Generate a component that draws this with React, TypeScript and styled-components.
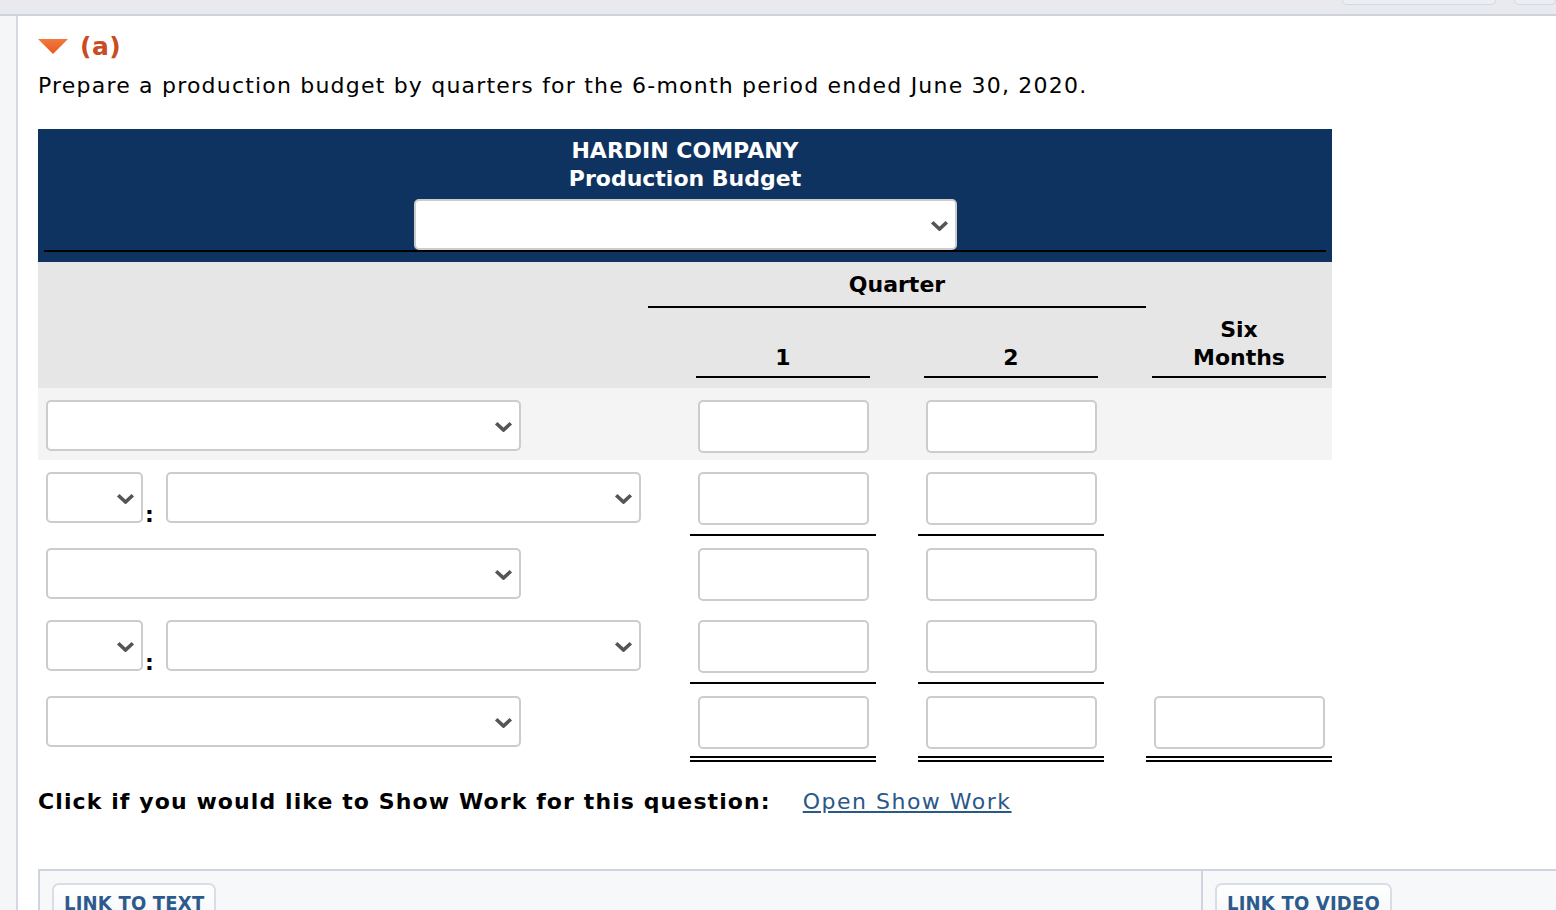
import React from 'react';
import styled, { createGlobalStyle } from 'styled-components';

const GlobalStyle = createGlobalStyle`
  html, body {
    margin: 0;
    padding: 0;
    background: #ffffff;
  }
  body {
    font-family: "DejaVu Sans", Verdana, sans-serif;
    color: #000000;
  }
`;

const Page = styled.div`
  width: 1556px;
  height: 910px;
  overflow: hidden;
  display: flex;
  flex-direction: column;
`;

const TopBar = styled.div`
  height: 14px;
  flex: none;
  background: #e8eaf0;
  border-bottom: 2px solid #cdd3dd;
  display: flex;
  justify-content: flex-end;
  gap: 18px;
`;

const TopTab = styled.div<{ $w: number }>`
  width: ${(p) => p.$w}px;
  height: 4px;
  border: 1px solid #d3d7df;
  border-top: none;
  border-radius: 0 0 6px 6px;
  background: #eceef3;
`;

const Body = styled.div`
  flex: 1;
  display: flex;
`;

const SideStrip = styled.div`
  width: 16px;
  flex: none;
  background: #f5f6f8;
  border-right: 2px solid #d3d8e1;
`;

const Content = styled.div`
  flex: 1;
  padding: 15px 0 0 20px;
`;

const PartHead = styled.div`
  display: flex;
  align-items: center;
  gap: 12px;
  height: 30px;
`;

const PartLabel = styled.span`
  color: #c84c24;
  font-weight: bold;
  font-size: 25px;
  letter-spacing: 0.5px;
`;

const Prompt = styled.p`
  margin: 10px 0 0 0;
  font-size: 22px;
  line-height: 30px;
  letter-spacing: 1.2px;
`;

const Budget = styled.div`
  width: 1294px;
  margin-top: 28px;
`;

const Banner = styled.div`
  background: #0f3361;
  padding: 8px 6px 10px 6px;
  display: flex;
  flex-direction: column;
  align-items: center;
`;

const BannerTitle = styled.div`
  color: #ffffff;
  font-weight: bold;
  font-size: 22px;
  line-height: 28px;
  text-align: center;
`;

const BannerRule = styled.div`
  align-self: stretch;
  border-bottom: 2px solid #000000;
  display: flex;
  justify-content: center;
  margin-top: 6px;
`;

const HeadGrid = styled.div`
  display: grid;
  grid-template-columns: 610px 42px 186px 42px 186px 42px 186px;
  row-gap: 8px;
  background: #e6e6e6;
  padding-bottom: 10px;
`;

const HeadText = styled.div<{ $col: string; $row: number; $inset?: number }>`
  grid-column: ${(p) => p.$col};
  grid-row: ${(p) => p.$row};
  margin: 0 ${(p) => p.$inset ?? 0}px;
  align-self: end;
  font-weight: bold;
  font-size: 22px;
  line-height: 28px;
  text-align: center;
  padding: ${(p) => (p.$row === 1 ? '9px 0 7px' : '0 0 4px')};
  border-bottom: 2px solid #000000;
`;

const Row = styled.div<{ $shade?: boolean }>`
  display: grid;
  grid-template-columns: 652px 186px 42px 186px 42px 186px;
  background: ${(p) => (p.$shade ? '#f4f4f4' : '#ffffff')};
`;

const LabelCell = styled.div`
  grid-column: 1;
  padding: 12px 0 0 8px;
  display: flex;
  align-items: flex-start;
`;

const ValueCell = styled.div<{ $col: number; $rule?: 'single' | 'double' }>`
  grid-column: ${(p) => p.$col};
  padding: 12px 7px ${(p) => (p.$rule === 'single' ? 9 : 7)}px 8px;
  border-bottom: ${(p) =>
    p.$rule === 'single' ? '2px solid #000' : p.$rule === 'double' ? '6px double #000' : 'none'};
`;

const Amount = styled.input`
  box-sizing: border-box;
  width: 171px;
  height: 53px;
  border: 2px solid #cccccc;
  border-radius: 5px;
  background: #ffffff;
  display: block;
  outline: none;
`;

const SelectWrap = styled.div<{ $w: number; $h: number }>`
  position: relative;
  width: ${(p) => p.$w}px;
  height: ${(p) => p.$h}px;
  flex: none;
`;

const SelectField = styled.select`
  box-sizing: border-box;
  width: 100%;
  height: 100%;
  appearance: none;
  border: 2px solid #cccccc;
  border-radius: 5px;
  background: #ffffff;
  outline: none;
  margin: 0;
`;

const Chevron = styled.svg`
  position: absolute;
  right: 8px;
  top: 50%;
  margin-top: -5px;
  pointer-events: none;
`;

const Colon = styled.span`
  align-self: flex-end;
  font-size: 22px;
  line-height: 22px;
  width: 23px;
  padding-left: 2px;
  box-sizing: border-box;
  margin-bottom: 10px;
  font-weight: bold;
`;

const WorkLine = styled.div`
  margin-top: 25px;
  display: flex;
  align-items: center;
  gap: 32px;
  line-height: 30px;
  font-size: 22px;
`;

const WorkPrompt = styled.span`
  font-weight: bold;
  letter-spacing: 1.1px;
`;

const WorkLink = styled.a`
  color: #2a5889;
  text-decoration: underline;
  letter-spacing: 1.5px;
`;

const Resources = styled.div`
  margin-top: 52px;
  border-top: 2px solid #cfd5df;
  border-left: 2px solid #cfd5df;
  background: #f7f8fa;
  height: 60px;
  display: grid;
  grid-template-columns: 1161px 1fr;
`;

const ResourceCell = styled.div<{ $divider?: boolean }>`
  padding: 12px 0 0 12px;
  border-left: ${(p) => (p.$divider ? '2px solid #cfd5df' : 'none')};
`;

const ResourceButton = styled.button`
  font-family: "DejaVu Sans Condensed", "DejaVu Sans", sans-serif;
  font-weight: bold;
  font-size: 20px;
  color: #2d5a8c;
  background: linear-gradient(#ffffff, #f1f3f6);
  border: 2px solid #d8dde6;
  border-radius: 7px;
  padding: 6px 10px 20px;
  letter-spacing: 0.2px;
`;

function Select({ w, h = 51 }: { w: number; h?: number }) {
  return (
    <SelectWrap $w={w} $h={h}>
      <SelectField defaultValue="">
        <option value="" />
      </SelectField>
      <Chevron width="19" height="11" viewBox="0 0 19 11">
        <path d="M2.2 2.2 L9.5 9 L16.8 2.2" fill="none" stroke="#555555" strokeWidth="3.6" />
      </Chevron>
    </SelectWrap>
  );
}

function Triangle() {
  return (
    <svg width="30" height="15" viewBox="0 0 30 15">
      <defs>
        <linearGradient id="tri" x1="0" y1="0" x2="0" y2="1">
          <stop offset="0" stopColor="#f2793f" />
          <stop offset="1" stopColor="#e85a1e" />
        </linearGradient>
      </defs>
      <path d="M0 0 H30 L15 15 Z" fill="url(#tri)" />
    </svg>
  );
}

type RuleKind = 'single' | 'double' | undefined;

interface LineSpec {
  prefix: boolean;
  shade?: boolean;
  rule?: RuleKind;
  total?: boolean;
}

const lines: LineSpec[] = [
  { prefix: false, shade: true },
  { prefix: true, rule: 'single' },
  { prefix: false },
  { prefix: true, rule: 'single' },
  { prefix: false, rule: 'double', total: true },
];

export default function App() {
  return (
    <Page>
      <GlobalStyle />
      <TopBar>
        <TopTab $w={152} />
        <TopTab $w={40} />
      </TopBar>
      <Body>
        <SideStrip />
        <Content>
          <PartHead>
            <Triangle />
            <PartLabel>(a)</PartLabel>
          </PartHead>
          <Prompt>Prepare a production budget by quarters for the 6-month period ended June 30, 2020.</Prompt>

          <Budget>
            <Banner>
              <BannerTitle>HARDIN COMPANY</BannerTitle>
              <BannerTitle>Production Budget</BannerTitle>
              <BannerRule>
                <Select w={543} h={51} />
              </BannerRule>
            </Banner>
            <HeadGrid>
              <HeadText $col="2 / 7" $row={1}>Quarter</HeadText>
              <HeadText $col="3" $row={2} $inset={6}>1</HeadText>
              <HeadText $col="5" $row={2} $inset={6}>2</HeadText>
              <HeadText $col="7" $row={2} $inset={6}>
                Six
                <br />
                Months
              </HeadText>
            </HeadGrid>

            {lines.map((ln, i) => (
              <Row key={i} $shade={ln.shade}>
                <LabelCell>
                  {ln.prefix ? (
                    <>
                      <Select w={97} />
                      <Colon>:</Colon>
                      <Select w={475} />
                    </>
                  ) : (
                    <Select w={475} />
                  )}
                </LabelCell>
                <ValueCell $col={2} $rule={ln.rule}>
                  <Amount />
                </ValueCell>
                <ValueCell $col={4} $rule={ln.rule}>
                  <Amount />
                </ValueCell>
                {ln.total && (
                  <ValueCell $col={6} $rule={ln.rule}>
                    <Amount />
                  </ValueCell>
                )}
              </Row>
            ))}
          </Budget>

          <WorkLine>
            <WorkPrompt>Click if you would like to Show Work for this question:</WorkPrompt>
            <WorkLink href="#">Open Show Work</WorkLink>
          </WorkLine>

          <Resources>
            <ResourceCell>
              <ResourceButton>LINK TO TEXT</ResourceButton>
            </ResourceCell>
            <ResourceCell $divider>
              <ResourceButton>LINK TO VIDEO</ResourceButton>
            </ResourceCell>
          </Resources>
        </Content>
      </Body>
    </Page>
  );
}
